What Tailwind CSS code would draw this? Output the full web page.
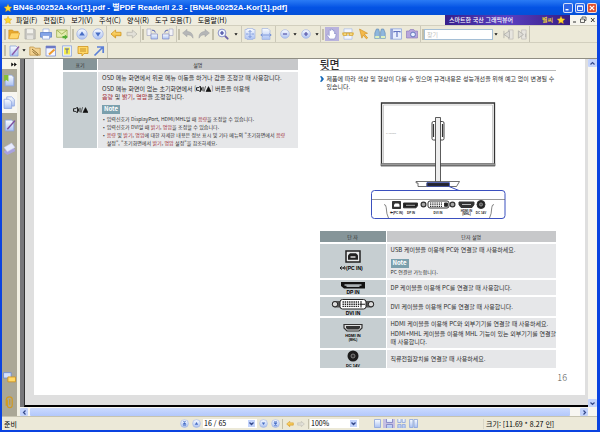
<!DOCTYPE html>
<html lang="ko">
  <head>
    <meta charset="UTF-8" />
    <meta name="viewport" content="width=device-width, initial-scale=1.0" />
    <title>BN46-00252A-Kor[1].pdf - 별PDF ReaderII 2.3</title>
    <script src="https://cdn.jsdelivr.net/npm/@tailwindcss/browser@4"></script>
  </head>
  <body class="min-h-screen flex flex-col bg-[#0a43e0] font-['Noto_Sans_CJK_KR','Noto_Sans',sans-serif] text-[7px] leading-[10px] text-black overflow-hidden">
    <!-- shared gradients and shapes -->
    <svg class="absolute w-0 h-0" aria-hidden="true">
      <defs>
        <linearGradient id="blue" x1="0" y1="0" x2="0" y2="1"><stop offset="0" stop-color="#fbfdff" /><stop offset="1" stop-color="#a9c0f2" /></linearGradient>
        <linearGradient id="gold" x1="0" y1="0" x2="0" y2="1"><stop offset="0" stop-color="#ffe48a" /><stop offset="1" stop-color="#eeb02c" /></linearGradient>
        <symbol id="star" viewBox="0 0 10 10"><path d="M5 .4 6.5 3.4 9.8 3.9 7.4 6.2 8 9.5 5 7.9 2 9.5 2.6 6.2.2 3.9 3.5 3.4Z" fill="#ffd92e" stroke="#d9960f" stroke-width=".5" /></symbol>
        <symbol id="page" viewBox="0 0 12 12"><path d="M2 1h6l2 2v8H2Z" fill="url(#blue)" stroke="#8ba3dc" stroke-width=".8" /></symbol>
        <symbol id="back" viewBox="0 0 12 12"><path d="M1 6 5.6 2v2.3H11v3.4H5.6V10Z" fill="url(#gold)" stroke="#cf9420" stroke-width=".8" /></symbol>
        <symbol id="fwd" viewBox="0 0 12 12"><path d="M11 6 6.4 2v2.3H1v3.4h5.4V10Z" fill="#e2e0d8" stroke="#b9b7ae" stroke-width=".8" /></symbol>
        <symbol id="ball" viewBox="0 0 12 12"><circle cx="6" cy="6" r="5.2" fill="url(#blue)" stroke="#a9b8e2" stroke-width=".9" /></symbol>
        <symbol id="drop" viewBox="0 0 4 3"><path d="M.4.3h3.2L2 2.4Z" fill="#111" /></symbol>
        <symbol id="volume" viewBox="0 0 15 6"><path d="M.5 1.7h1.7L4.5.3v5.4L2.2 4.3H.5ZM5.5 1.5v3M7 .8v4.4" fill="none" stroke="#111" stroke-width=".9" /><path d="M8 5.8 9.6.2M10 5.5 12.500.6 15 5.5Z" fill="#111" stroke="#111" stroke-width=".6" /></symbol>
      </defs>
    </svg>

    <header class="flex items-center h-[15px] pl-1 pr-[3px] bg-linear-to-b from-[#2a7bf5] via-[#0453e4] to-[#0450d8] text-white">
      <svg class="w-2 h-2 shrink-0"><use href="#star" /></svg>
      <h1 class="flex-1 pl-px pt-px font-['Liberation_Sans','Noto_Sans_CJK_KR',sans-serif] text-[8px] font-bold whitespace-nowrap">BN46-00252A-Kor[1].pdf - 별PDF ReaderII 2.3 - [BN46-00252A-Kor[1].pdf]</h1>
      <div class="flex gap-0.5">
        <button aria-label="최소화" class="size-[10px] rounded-[2px] border border-white/80 bg-[#2e66e6]"><svg viewBox="0 0 8 8"><path d="M1.5 5.7H4.5" stroke="#fff" stroke-width="1.4" /></svg></button>
        <button aria-label="최대화" class="size-[10px] rounded-[2px] border border-white/80 bg-[#2e66e6]"><svg viewBox="0 0 8 8"><path d="M1.5 1.8h5v4.7h-5ZM1.5 2.4h5" fill="none" stroke="#fff" stroke-width=".9" /></svg></button>
        <button aria-label="닫기" class="size-[10px] rounded-[2px] border border-white/80 bg-[#df5130]"><svg viewBox="0 0 8 8"><path d="m1.8 1.8 4.4 4.4m0-4.4L1.8 6.2" stroke="#fff" stroke-width="1.2" /></svg></button>
      </div>
    </header>

    <div class="flex-1 flex flex-col ml-0.5 mr-[3px] mb-0.5 bg-[#ece9d8]">
      <nav class="flex items-center h-[10px] pl-0.5 bg-[#efede0]">
        <svg class="w-2 h-2 shrink-0"><use href="#star" /></svg>
        <div class="flex-1 flex gap-1.5 pl-1 whitespace-nowrap">
          <button>파일(F)</button>
          <button>편집(E)</button>
          <button>보기(V)</button>
          <button>주석(C)</button>
          <button>양식(R)</button>
          <button>도구 모음(T)</button>
          <button>도움말(H)</button>
        </div>
        <a href="#" class="flex items-center w-[125px] h-[10px] pl-1 pr-[5px] bg-linear-to-r from-[#37208c] via-[#5a3fc0] to-[#371d84] text-[6px] font-medium text-white whitespace-nowrap">
          <span class="flex-1">스마트한 국산 그래픽뷰어</span>
          <span class="text-[#ffe32b] pr-1">별씨</span>
          <svg class="w-2 h-2"><use href="#star" /></svg>
        </a>
        <div class="flex bg-[#f6f5ee]">
          <button aria-label="문서 최소화" class="w-2 h-[10px]"><svg viewBox="0 0 8 10"><path d="M3 7h3" stroke="#333" /></svg></button>
          <button aria-label="문서 복원" class="w-[10px] h-[10px]"><svg viewBox="0 0 10 10"><path d="M4 3.5V2h4v3.5H6.5M2.5 4h4v3.5h-4Z" fill="none" stroke="#444" stroke-width=".8" /></svg></button>
          <button aria-label="문서 닫기" class="w-[9px] h-[10px]"><svg viewBox="0 0 9 10"><path d="m3 3 3.5 4m0-4L3 7" stroke="#333" /></svg></button>
        </div>
      </nav>

      <div class="flex border-y border-[#d2cfbe] h-[18px]">
        <div class="flex items-center pl-0.5 border-r border-[#c5c2b2]">
          <i class="w-0.5 h-[11px] bg-[#c3bfaa]"></i>
          <button aria-label="열기" class="w-4 flex justify-center"><svg class="size-3" viewBox="0 0 12 12"><path d="M.8 10.5V2h3.8l1 1.3h4.6v7.2Z" fill="#e9a92e" stroke="#c98d20" stroke-width=".6" /><path d="M.8 10.8 3 5h8.7l-2 5.8Z" fill="#ffd66b" stroke="#d89a25" stroke-width=".6" /></svg></button>
          <button aria-label="저장" class="w-4 flex justify-center"><svg class="size-3" viewBox="0 0 12 12"><path d="M1 1h9.3l.9.9V11H1Z" fill="#c9c8c3" stroke="#aaa9a4" stroke-width=".7" /><path d="M3 1.2h6v4H3Z" fill="#f2f1ec" /><path d="M3 7.3h6V11H3Z" fill="#e4e3de" /></svg></button>
          <button aria-label="인쇄" class="w-4 flex justify-center"><svg class="size-3" viewBox="0 0 12 12"><path d="M3 1h6v4H3Z" fill="#fff" stroke="#8ba3dc" stroke-width=".6" /><path d="M.5 4.5h11v4.7H.5Z" fill="#82a4e8" stroke="#5478c4" stroke-width=".7" /><path d="M2.5 7.5h7v3.6h-7Z" fill="#f3f7ff" stroke="#7893d2" stroke-width=".6" /></svg></button>
          <button aria-label="메일" class="w-4 flex justify-center"><svg class="size-3" viewBox="0 0 12 12"><path d="M.6 2h10.5v7.3H.6Z" fill="#e5edb0" stroke="#93a846" stroke-width=".7" /><path d="m.8 2.2 5 4 5.1-4" fill="none" stroke="#93a846" stroke-width=".8" /><path d="M6.5 8h2.3V6.5l3 2.6-3 2.6v-1.5H6.5Z" fill="#52ae35" /></svg></button>
          <i class="w-px h-4 mr-px bg-[#cbc8b8]"></i><i class="w-0.5 h-[11px] bg-[#c3bfaa]"></i>
          <button aria-label="이전 쪽" class="w-4 flex justify-center"><svg class="size-3" viewBox="0 0 12 12"><use href="#ball" /><path d="m6 3.6 2.8 3.8H3.2Z" fill="#476dc4" /></svg></button>
          <button aria-label="다음 쪽" class="w-4 flex justify-center"><svg class="size-3" viewBox="0 0 12 12"><use href="#ball" /><path d="m6 8.4 2.8-3.8H3.2Z" fill="#476dc4" /></svg></button>
          <i class="w-px h-4 mr-px bg-[#cbc8b8]"></i>
          <button aria-label="뒤로" class="w-4 flex justify-center"><svg class="size-3"><use href="#back" /></svg></button>
          <button aria-label="앞으로" class="w-4 flex justify-center"><svg class="size-3"><use href="#fwd" /></svg></button>
          <i class="w-px h-4 mr-px bg-[#cbc8b8]"></i><i class="w-0.5 h-[11px] bg-[#c3bfaa]"></i>
          <button aria-label="왼쪽 회전" class="w-4 flex justify-center"><svg class="size-3" viewBox="0 0 12 12"><path d="M1 1h4v6.5H1Z" fill="#f3f3f8" stroke="#a6a9c4" stroke-width=".7" /><path d="M5 6h6.5v5H5Z" fill="url(#blue)" stroke="#8389c4" stroke-width=".7" /><path d="M6 2.2q3-.6 3.3 2.3" fill="none" stroke="#5a66b5" /></svg></button>
          <button aria-label="오른쪽 회전" class="w-4 flex justify-center"><svg class="size-3" viewBox="0 0 12 12"><path d="M7 1h4v6.5H7Z" fill="#f3f3f8" stroke="#a6a9c4" stroke-width=".7" /><path d="M.5 6H7v5H.5Z" fill="url(#blue)" stroke="#8389c4" stroke-width=".7" /><path d="M6 2.2q-3-.6-3.3 2.3" fill="none" stroke="#5a66b5" /></svg></button>
          <i class="w-px h-4 mr-px bg-[#cbc8b8]"></i><i class="w-0.5 h-[11px] bg-[#c3bfaa]"></i>
          <button aria-label="실행 취소" class="w-4 flex justify-center"><svg class="size-3" viewBox="0 0 12 12"><path d="M.6 5 5 1.4v2.2c4 0 6.2 2.4 6 6.6C9.7 7.6 8 6.7 5 6.7v2Z" fill="#b5b6b7" stroke="#9fa0a2" stroke-width=".5" /></svg></button>
          <button aria-label="다시 실행" class="w-4 flex justify-center"><svg class="size-3" viewBox="0 0 12 12"><path d="M11.4 5 7 1.4v2.2c-4 0-6.2 2.4-6 6.6 1.3-2.6 3-3.5 6-3.5v2Z" fill="#b5b6b7" stroke="#9fa0a2" stroke-width=".5" /></svg></button>
          <i class="w-0.5 h-[11px] mr-px bg-[#c3bfaa]"></i>
          <button aria-label="확대 도구" class="w-4 flex justify-center"><svg class="size-3" viewBox="0 0 12 12"><path d="m7.5 7.5 3.2 3.2" stroke="#6d62a8" stroke-width="1.8" stroke-linecap="round" /><circle cx="5" cy="5" r="3.9" fill="#eef4ff" stroke="#8a90c8" /><path d="M5 3v4M3 5h4" stroke="#3b3f9c" stroke-width="1.2" /></svg></button>
          <button aria-label="확대 메뉴" class="w-[10px] flex justify-center"><svg class="w-1 h-[3px]"><use href="#drop" /></svg></button>
          <i class="w-px h-4 bg-[#cbc8b8]"></i>
          <button aria-label="쪽 맞춤" class="w-4 flex justify-center"><svg class="size-3" viewBox="0 0 12 12"><path d="M1 1.5h2V.5h6v1h2v9H9v1H3v-1H1Z" fill="url(#blue)" stroke="#a3b4e0" stroke-width=".7" /><path d="M6 2.5v7M4.5 4 6 2.5 7.5 4m-3 4L6 9.5 7.5 8M2 6h2.5M7.5 6H10" fill="none" stroke="#6f8dd6" stroke-width=".8" /></svg></button>
          <button aria-label="너비 맞춤" class="w-4 flex justify-center"><svg class="size-3" viewBox="0 0 12 12"><path d="M2 .5h6l2 2v9H2Z" fill="url(#blue)" stroke="#a3b4e0" stroke-width=".7" /><path d="M.5 7h11M2.5 5.5 1 7l1.5 1.5m7-3L11 7 9.5 8.5" fill="none" stroke="#6f8dd6" stroke-width=".8" /></svg></button>
          <i class="w-px h-4 mx-px bg-[#cbc8b8]"></i>
          <button aria-label="축소" class="w-[15px] flex justify-center"><svg class="size-[10px]" viewBox="0 0 12 12"><use href="#ball" /><path d="M3.5 6h5" stroke="#5150a4" stroke-width="1.4" /></svg></button>
          <button aria-label="축소 메뉴" class="w-1.5 flex justify-center"><svg class="w-1 h-[3px]"><use href="#drop" /></svg></button>
          <button aria-label="확대" class="w-[15px] flex justify-center"><svg class="size-[10px]" viewBox="0 0 12 12"><use href="#ball" /><path d="M3.5 6h5M6 3.5v5" stroke="#5150a4" stroke-width="1.4" /></svg></button>
          <button aria-label="배율 메뉴" class="w-[7px] flex justify-center"><svg class="w-1 h-[3px]"><use href="#drop" /></svg></button>
          <i class="w-px h-4 mr-px bg-[#cbc8b8]"></i><i class="w-0.5 h-[11px] bg-[#c3bfaa]"></i>
          <button aria-label="손 도구" class="w-4 h-[14px] flex justify-center items-center"><span class="flex justify-center items-center size-[14px] bg-[#b9b3dd]"><svg class="size-3" viewBox="0 0 12 12"><path d="M3.6 11 1 7.3c-.5-.9.6-1.4 1.2-.7l1 1V2.6c0-.9 1.2-.9 1.3 0V1.5c0-.9 1.3-.9 1.4 0v.7c0-.9 1.3-.9 1.4 0v1c.1-.8 1.3-.8 1.3 0V6c.2-.8 1.6-.9 1.5.1C10 8 9.5 9.5 8.5 11Z" fill="#fff" stroke="#8087c8" stroke-width=".6" /></svg></span></button>
          <button aria-label="안경" class="w-4 flex justify-center"><svg class="size-3" viewBox="0 0 12 12"><path d="M2 .8h8v3.7H2ZM2 7.5h8v3.7H2Z" fill="#f2f6ff" stroke="#9db3e2" stroke-width=".6" /><path d="M.5 5h11M1 5v2.2h3.8V5m2.4 0v2.2H11V5" fill="#fff2b0" stroke="#dba323" stroke-width="1" /></svg></button>
          <button aria-label="선택" class="w-4 flex justify-center"><svg class="size-3" viewBox="0 0 12 12"><path d="m1.5 1 8 4.3-3.2.8 3.4 3.7-1.2 1.1-3.3-3.7-1.3 3Z" fill="#f4b94a" stroke="#cf8b1c" stroke-width=".6" /></svg></button>
          <button aria-label="찾기 도구" class="w-4 flex justify-center"><svg class="size-3" viewBox="0 0 12 12"><path d="M2.4 1h2.2l.8 3v6.5H.8V5ZM7.4 1h2.2l1.6 4v5.5H6.6V4Z" fill="#8fb7dd" stroke="#5884b2" stroke-width=".6" /><path d="M1.2 8h4v2.2h-4ZM7 8h4v2.2H7Z" fill="#dcf0c0" /></svg></button>
          <button aria-label="텍스트 선택" class="w-4 flex justify-center"><svg class="size-3" viewBox="0 0 12 12"><path d="M.5.8h11v10.4H.5Z" fill="#e8effd" stroke="#8fa6dc" stroke-width=".8" /><path d="M4 3.5h6M7 3.5V9M4 3v1.5M10 3v1.5M2 1v10" stroke="#6275c0" stroke-width="1.2" /></svg></button>
          <button aria-label="스냅샷" class="w-4 flex justify-center"><svg class="size-3" viewBox="0 0 12 12"><path d="M.5 3h2.7l1-1.5h3.5l1 1.5h2.8v7H.5Z" fill="#b7a5dc" stroke="#8573b8" stroke-width=".6" /><circle cx="7" cy="6.5" r="2.4" fill="#e7f0ff" stroke="#6176bd" /></svg></button>
          <i class="w-px h-4 mr-px bg-[#cbc8b8]"></i><i class="w-0.5 h-[11px] bg-[#c3bfaa]"></i>
          <input type="text" aria-label="찾기" placeholder="찾기" class="w-[69px] h-[11px] pl-0.5 bg-white border border-[#a5bfd6] text-[6px] placeholder:text-[#c2c2bd]" />
          <button aria-label="찾기 메뉴" class="w-1.5 flex justify-center"><svg class="w-1 h-[3px]"><use href="#drop" /></svg></button>
          <button aria-label="이전 찾기" class="w-[14px] flex justify-center ml-0.5"><svg class="size-[11px]" viewBox="0 0 12 12"><path d="M6 1h5v10H6Z" fill="#e7e5df" stroke="#bbb9b4" stroke-width=".7" /><path d="M1 6 7 2v8ZM1 2v8" fill="#dddbd5" stroke="#a9a8a5" stroke-width=".8" /></svg></button>
          <button aria-label="다음 찾기" class="w-[14px] flex justify-center"><svg class="size-[11px]" viewBox="0 0 12 12"><path d="M5 1h5v10H5Z" fill="#e7e5df" stroke="#bbb9b4" stroke-width=".7" /><path d="M7 6 1.5 2v8ZM9.5 5v4" fill="#dddbd5" stroke="#a9a8a5" stroke-width=".8" /></svg></button>
        </div>
      </div>

      <div class="flex h-4 border-b border-[#8f8d83]">
        <div class="flex items-center pl-0.5 border-r border-[#c5c2b2]">
          <i class="w-0.5 h-[11px] bg-[#c3bfaa]"></i>
          <button aria-label="펜" class="w-[15px] flex justify-center"><svg class="size-3" viewBox="0 0 12 12"><use href="#page" /><path d="m4 10 7-8.5" stroke="#8b5aa8" stroke-width="1.4" /></svg></button>
          <button aria-label="펜 메뉴" class="w-1.5 flex justify-center"><svg class="w-1 h-[3px]"><use href="#drop" /></svg></button>
          <button aria-label="첨부" class="w-4 flex justify-center"><svg class="size-3" viewBox="0 0 12 12"><path d="M.8 2h4l1 1.2h5.4v7H.8Z" fill="#f2d190" stroke="#bf9140" stroke-width=".7" /><path d="m3 4 5.5 4.5c1.2 1 .2 2.3-1 1.3L3.5 6.5" fill="none" stroke="#8b6c2e" /></svg></button>
          <button aria-label="편집" class="w-4 flex justify-center"><svg class="size-3" viewBox="0 0 12 12"><path d="M1 1h9.5v10H1Z" fill="#f4f6ff" stroke="#8392cf" stroke-width=".8" /><path d="M1 1h9.5v2.3H1Z" fill="#6d79c4" /><path d="m4 9.5 5.5-5" stroke="#ef9a2e" stroke-width="2" /></svg></button>
          <button aria-label="형광펜" class="w-4 flex justify-center"><svg class="size-3" viewBox="0 0 12 12"><path d="M1.5.8h9v10.4h-9Z" fill="#e9f0fd" stroke="#8fa6dc" stroke-width=".8" /><path d="M3 2.5h6v7H3Z" fill="#f6ee4a" /><path d="M4 4h4M6 4v4.5" stroke="#5a64a0" /></svg></button>
          <button aria-label="메모" class="w-4 flex justify-center"><svg class="size-3" viewBox="0 0 12 12"><path d="M1 1.5h10v7H7L5 11V8.5H1Z" fill="#ffd868" stroke="#cf9420" stroke-width=".8" /><path d="M3 4h6M3 6h6" stroke="#b98014" stroke-width=".8" /></svg></button>
          <button aria-label="화살표" class="w-4 flex justify-center"><svg class="size-3" viewBox="0 0 12 12"><path d="m1.5 10.5 8-8M4 2h6.2v6" fill="none" stroke="#5c80d8" stroke-width="1.7" /></svg></button>
        </div>
      </div>

      <main class="flex-1 flex min-h-0">
        <aside class="w-[18px] shrink-0 flex flex-col items-start bg-[#aaa796] border-r-3 border-[#f1efe2]">
          <button aria-label="펼치기" class="w-full h-[10px] bg-[#f7f5e9] flex items-center justify-end"><svg class="w-[6px] h-[5px]" viewBox="0 0 6 5"><path d="M.3.5 2.8 2.5.3 4.5ZM3.2.5 5.8 2.5 3.2 4.5Z" /></svg></button>
          <button aria-label="책갈피" class="w-full h-[23px] flex justify-center items-center"><svg class="size-[13px]" viewBox="0 0 12 12"><use href="#page" /><path d="M1 1h4v6L3 5.5 1 7Z" fill="#84bf35" /></svg></button>
          <button aria-label="쪽" class="w-full h-[21px] bg-[#f7f6f0] flex justify-center items-center"><svg class="size-[13px]" viewBox="0 0 12 12"><path d="M3.5.8H8l2.5 2.5v6h-7Z" fill="url(#blue)" stroke="#8ba3dc" stroke-width=".7" /><path d="M1 3h4.5L8 5.5v6H1Z" fill="url(#blue)" stroke="#8ba3dc" stroke-width=".7" /></svg></button>
          <button aria-label="주석" class="w-full h-[24px] flex justify-center items-center"><svg class="size-[13px]" viewBox="0 0 12 12"><use href="#page" /><path d="m4 9.5 7-8" stroke="#7c4f9e" stroke-width="1.4" /></svg></button>
          <button aria-label="레이어" class="w-full h-[22px] flex justify-center items-center"><svg class="size-[13px]" viewBox="0 0 12 12"><path d="m1 8.5 7-4L11 7v1.5L4 12 1 9.8Z" fill="#a9a2de" /><path d="m1 5 7-4L11 5 4 9Z" fill="#e8ebfc" stroke="#c3c8ee" stroke-width=".5" /></svg></button>
          <button aria-label="의견" class="w-full h-[22px] mt-auto flex justify-center items-center"><svg class="size-[13px]" viewBox="0 0 12 12"><path d="M.5 1.5h7v5h-7Z" fill="#d4e1fd" stroke="#6e8bd4" stroke-width=".8" /><path d="M4.5 5.5h7V10h-7Z" fill="#ffd868" stroke="#cf9420" stroke-width=".8" /></svg></button>
          <button aria-label="첨부 파일" class="w-full h-[28px] flex justify-center items-center"><svg class="size-[13px]" viewBox="0 0 12 12"><path d="M4 3.5v5c0 3 4.5 3 4.5 0V3c0-3-5-3-5.5 0v6M6.2 3v5" fill="none" stroke="#d19a20" stroke-width="1.1" /></svg></button>
        </aside>

        <div class="flex-1 min-w-0 flex flex-col">
          <div class="flex-1 flex min-h-0">
            <div class="flex-1 min-w-0 bg-[#dfdfdf] border-l-4 border-[#77777a]">
              <div class="h-full flex pl-[9px] pr-[3px] pb-[10px] border-l border-b-2 border-l-[#333] border-b-black overflow-hidden">
                <article class="flex-1 grid grid-cols-2 bg-white text-[6px] leading-[8px] text-[#2e2e2e] whitespace-nowrap">
                  <section class="pl-[29px] pr-[12px]">
                    <table class="w-full table-fixed border-separate border-spacing-0">
                      <thead>
                        <tr class="h-[11px] text-[5px]">
                          <th class="w-[34px] font-normal bg-[#869599]">표기</th>
                          <th class="font-normal bg-[#c7c8ca] border-l border-white">설명</th>
                        </tr>
                      </thead>
                      <tbody>
                        <tr>
                          <td class="bg-[#c6ced1] border-t-2 border-white"><svg class="mx-auto w-[15px] h-[6px]"><use href="#volume" /></svg></td>
                          <td class="bg-[#e6e7e9] border-t-2 border-l border-white pl-1 pt-0.5 pb-px">
                            <p>OSD 메뉴 화면에서 위로 메뉴 이동을 하거나 값을 조정할 때 사용합니다.</p>
                            <p class="mt-[3px]">OSD 메뉴 화면이 없는 초기화면에서 [<svg class="inline w-[15px] h-[6px] align-[-1px]"><use href="#volume" /></svg>] 버튼을 이용해<br /><span class="text-[#a3303a]">음량</span> 및 <span class="text-[#a3303a]">밝기</span>, <span class="text-[#a3303a]">명암</span>을 조정합니다.</p>
                            <div class="mt-1 w-[18px] h-[9px] bg-[#7ba0ad] text-white font-bold text-center">Note</div>
                            <ul class="mt-px text-[5px]">
                              <li class="flex gap-0.5 pl-px"><span>•</span><span>입력신호가 DisplayPort, HDMI/MHL일 때 <span class="text-[#a3303a]">음량</span>을 조정할 수 있습니다.</span></li>
                              <li class="flex gap-0.5 pl-px"><span>•</span><span>입력신호가 DVI일 때 <span class="text-[#a3303a]">밝기</span>, <span class="text-[#a3303a]">명암</span>을 조정할 수 있습니다.</span></li>
                              <li class="flex gap-0.5 pl-px"><span>•</span><span><span class="text-[#a3303a]">음량</span> 및 <span class="text-[#a3303a]">밝기</span>, <span class="text-[#a3303a]">명암</span>에 대한 자세한 내용은 정보 표시 및 기타 메뉴의 "초기화면에서 <span class="text-[#a3303a]">음량</span><br />설정", "초기화면에서 <span class="text-[#a3303a]">밝기</span>, <span class="text-[#a3303a]">명암</span> 설정"을 참조하세요.</span></li>
                            </ul>
                          </td>
                        </tr>
                      </tbody>
                    </table>
                  </section>

                  <section class="pl-[10px] pr-[18px]">
                    <div class="mr-[11px]">
                      <h2 class="h-3 text-[11px] leading-[11px] font-medium border-b border-[#bbb]">뒷면</h2>
                      <div class="flex gap-[3px] pt-1">
                        <svg class="w-1 h-[6px] mt-px" viewBox="0 0 4 6"><path d="M0 .2h1.8L4 3 1.8 5.8H0L1.5 3Z" fill="#1468b8" /></svg>
                        <p>제품에 따라 색상 및 형상이 다를 수 있으며 규격내용은 성능개선을 위해 예고 없이 변경될 수<br />있습니다.</p>
                      </div>
                      <svg class="block mx-auto mt-[11px] w-[136px] h-[118px]" viewBox="370 103 136 118" fill="none" stroke="#333" font-family="Liberation Sans" font-weight="bold">
                        <path d="M381.5 104h113v62.5h-113Z" stroke-width="1.3" />
                        <path d="M383.5 106h109v58.5h-109Z" stroke="#999" stroke-width=".5" />
                        <path d="M381 164.5h114v2.3H381Z" fill="#999" stroke="#555" stroke-width=".5" />
                        <text x="386" y="135" font-size="2" font-weight="normal" fill="#999" stroke="none">SAMSUNG</text>
                        <rect x="432" y="122.5" width="12" height="18.5" rx="1.5" fill="#fff" stroke-width=".9" />
                        <path d="M433.5 125v13m9-13v13" stroke-width="1.2" />
                        <path d="M435.5 118.5h5V183h-5Z" fill="#eee" stroke-width=".8" />
                        <path d="M416 182.5h43.5l-3 5h-38.5v-3.5l-2-.2Z" fill="#fff" stroke-width=".7" />
                        <path d="M427 184h22v3h-22Z" fill="#223" />
                        <path d="M427 183.5h22.5v4H427Z" stroke="#3b50bf" stroke-width=".7" />
                        <path d="m449 187.5 10 4" stroke="#3b50bf" />
                        <rect x="371.5" y="191.5" width="133.5" height="28" rx="3" fill="#fff" stroke="#3b50bf" />
                        <path d="M372 200.5h133" stroke="#555" stroke-width=".6" />
                        <path d="M384 205.5q2 0 2.2 3 .3 7 2.3 10.5M494 205.5q-2 0-2.2 3-.3 7-2.3 10.5" stroke-width=".6" />
                        <path d="M392.5 202.5h8v7h-8Z" fill="#333" /><path d="M395 204.5h3.5l1 1.2v2H394v-2Z" fill="#fff" stroke="none" />
                        <path d="M403.5 204h14v2.8l-1.5 2h-12.5Z" fill="#222" /><path d="M406 206.3h9" stroke="#aaa" />
                        <circle cx="423.5" cy="205.5" r="2.4" fill="#aaa" stroke-width="1.2" /><circle cx="452.5" cy="205.5" r="2.4" fill="#aaa" stroke-width="1.2" />
                        <rect x="428" y="202" width="21" height="7" rx="2" fill="#fff" stroke-width="1" />
                        <path d="M430 204h12M430 205.8h12M430 207.5h12" stroke="#222" stroke-dasharray="1.3 .9" stroke-width="1.1" /><path d="M444.5 204h3v3.3h-3Z" fill="#222" />
                        <path d="M459 203h15v2.5l-2 3h-11l-2-3Z" fill="#333" /><path d="M462 205.5h9" stroke="#bbb" />
                        <circle cx="481" cy="205.5" r="4" fill="#222" /><circle cx="481" cy="205.5" r="1.6" fill="#555" stroke="#bbb" stroke-width=".6" />
                        <g font-size="3" fill="#222" stroke="none" text-anchor="middle">
                          <text x="396.5" y="214.5">⬅(PC IN)</text>
                          <text x="411" y="214.5">DP IN</text>
                          <text x="438" y="214.5">DVI IN</text>
                          <text x="466.5" y="213">HDMI IN</text>
                          <text x="466.5" y="216">(MHL)</text>
                          <text x="481" y="214.5">DC 14V</text>
                        </g>
                      </svg>

                      <table class="w-full mt-[11px] table-fixed border-separate border-spacing-0">
                        <thead>
                          <tr class="h-[11px] text-[5px]">
                            <th class="w-[66px] font-normal bg-[#869599]">단 자</th>
                            <th class="font-normal bg-[#c7c8ca] border-l border-white">단자 설명</th>
                          </tr>
                        </thead>
                        <tbody>
                          <tr class="h-[36px]">
                            <td class="bg-[#c6ced1] border-t-2 border-white">
                              <svg class="mx-auto w-[36px] h-[24px]" viewBox="0 0 36 24"><path d="M11 2h14v11H11Z" fill="#e8eaeb" stroke="#222" stroke-width="1.5" /><path d="M15 4.2h6l2 2v4.6H13V6.2Z" fill="#222" /><path d="M15.5 7h5v2h-5Z" fill="#aaa" /><path d="M5 19h6M6.8 17.4 5 19l1.8 1.6M8.500 19l1.3-1.8M8.500 19l1.3 1.6" fill="none" stroke="#111" stroke-width=".9" /><text x="11" y="21" font-family="Liberation Sans" font-weight="bold" font-size="5">(PC IN)</text></svg>
                            </td>
                            <td class="bg-[#e6e7e9] border-t-2 border-l border-white pl-1 align-top pt-0.5">
                              <p>USB 케이블을 이용해 PC와 연결할 때 사용하세요.</p>
                              <div class="mt-[5px] w-[18px] h-[9px] bg-[#7ba0ad] text-white font-bold text-center">Note</div>
                              <p class="text-[5px]">PC 연결만 가능합니다.</p>
                            </td>
                          </tr>
                          <tr class="h-[17px]">
                            <td class="bg-[#c6ced1] border-t-2 border-white">
                              <svg class="mx-auto w-[36px] h-[14px]" viewBox="0 0 36 14"><path d="M6 1h24v6.5H9L6 5Z" fill="#111" /><path d="M9.5 3.2h17v1.6h-2V6h-13V4.8h-2Z" fill="#aab1b4" /><text x="18" y="13" text-anchor="middle" font-family="Liberation Sans" font-weight="bold" font-size="5">DP IN</text></svg>
                            </td>
                            <td class="bg-[#e6e7e9] border-t-2 border-l border-white pl-1">DP 케이블을 이용해 PC를 연결할 때 사용합니다.</td>
                          </tr>
                          <tr class="h-[21px]">
                            <td class="bg-[#c6ced1] border-t-2 border-white">
                              <svg class="mx-auto w-[44px] h-[18px]" viewBox="0 0 44 18"><rect x="1" y="3" width="42" height="6.5" rx="3.2" fill="#555" /><circle cx="4" cy="6.2" r="2.7" fill="#ddd" stroke="#222" /><circle cx="40" cy="6.2" r="2.7" fill="#ddd" stroke="#222" /><rect x="9" y="1.5" width="26" height="9.5" rx="2.5" fill="#fff" stroke="#222" /><path d="M11.5 4H28M11.5 6.2H28M11.5 8.4H28" stroke="#222" stroke-width="1.4" stroke-dasharray="1.4 .8" /><path d="M30 3v6.5M28.5 6.2H34" stroke="#222" stroke-width="1.1" /><text x="22" y="17" text-anchor="middle" font-family="Liberation Sans" font-weight="bold" font-size="5">DVI IN</text></svg>
                            </td>
                            <td class="bg-[#e6e7e9] border-t-2 border-l border-white pl-1">DVI 케이블을 이용해 PC를 연결할 때 사용합니다.</td>
                          </tr>
                          <tr class="h-[32px]">
                            <td class="bg-[#c6ced1] border-t-2 border-white">
                              <svg class="mx-auto w-[36px] h-[20px]" viewBox="0 0 36 20"><path d="M9 1.5h18V5L24 8H12L9 5Z" fill="#ddd" stroke="#333" stroke-width="1.2" /><path d="M11 3h14v2l-1.5 1.5h-11L11 5Z" fill="#333" /><text x="18" y="14" text-anchor="middle" font-family="Liberation Sans" font-weight="bold" font-size="4">HDMI IN</text><text x="18" y="18" text-anchor="middle" font-family="Liberation Sans" font-weight="bold" font-size="3">(MHL)</text></svg>
                            </td>
                            <td class="bg-[#e6e7e9] border-t-2 border-l border-white pl-1 align-top pt-0.5">
                              <p>HDMI 케이블을 이용해 PC와 외부기기를 연결할 때 사용하세요.</p>
                              <p class="mt-0.5">HDMI+MHL 케이블을 이용해 MHL 기능이 있는 외부기기를 연결할<br />때 사용합니다.</p>
                            </td>
                          </tr>
                          <tr class="h-[20px]">
                            <td class="bg-[#c6ced1] border-t-2 border-white">
                              <svg class="mx-auto w-[36px] h-[18px]" viewBox="0 0 36 18"><circle cx="18" cy="6" r="5.5" fill="#1c1c1c" /><circle cx="18" cy="6" r="2" fill="#333" stroke="#999" stroke-width=".7" /><text x="18" y="17" text-anchor="middle" font-family="Liberation Sans" font-weight="bold" font-size="4">DC 14V</text></svg>
                            </td>
                            <td class="bg-[#e6e7e9] border-t-2 border-l border-white pl-1">직류전원장치를 연결할 때 사용하세요.</td>
                          </tr>
                        </tbody>
                      </table>
                    </div>
                    <p class="mt-[5px] text-right text-[9px] leading-[10px] font-light text-[#555]">16</p>
                  </section>
                </article>
              </div>
            </div>
            <div class="w-[9px] shrink-0 flex flex-col justify-between bg-[#f7f6f1]">
              <button aria-label="위로" class="h-2 rounded-[1px] bg-[#c3d3fc]"><svg class="mx-auto size-[5px]" viewBox="0 0 5 5"><path d="m.5 3.5 2-2 2 2" fill="none" stroke="#34498c" stroke-width="1.2" /></svg></button>
              <button aria-label="아래로" class="h-2 rounded-[1px] bg-[#c3d3fc]"><svg class="mx-auto size-[5px]" viewBox="0 0 5 5"><path d="m.5 1.5 2 2 2-2" fill="none" stroke="#34498c" stroke-width="1.2" /></svg></button>
            </div>
          </div>
          <div class="flex h-[9px] pt-px bg-[#f7f6f1]">
            <button aria-label="왼쪽으로" class="w-2 rounded-[1px] bg-[#c3d3fc]"><svg class="mx-auto size-[5px]" viewBox="0 0 5 5"><path d="m3.5.5-2 2 2 2" fill="none" stroke="#34498c" stroke-width="1.2" /></svg></button>
            <div class="flex-1 ml-0.5 mr-[10px] rounded-[1px] bg-linear-to-b from-[#cbdafe] to-[#b3c8fb]"></div>
            <button aria-label="오른쪽으로" class="w-2 mr-[9px] rounded-[1px] bg-[#c3d3fc]"><svg class="mx-auto size-[5px]" viewBox="0 0 5 5"><path d="m1.5.5 2 2-2 2" fill="none" stroke="#34498c" stroke-width="1.2" /></svg></button>
          </div>
        </div>
      </main>

      <footer class="flex items-center h-[14px] border-t border-[#c6c3b0] whitespace-nowrap">
        <span class="w-[176px] pl-0.5">준비</span>
        <button aria-label="처음" class="w-3 flex justify-center"><svg class="size-[9px]" viewBox="0 0 12 12"><use href="#ball" /><path d="M4 3.2h4M6 4.5 8 7H4ZM4 8.5h4" fill="#476dc4" stroke="#476dc4" stroke-width=".8" /></svg></button>
        <button aria-label="이전" class="w-3 flex justify-center"><svg class="size-[9px]" viewBox="0 0 12 12"><use href="#ball" /><path d="m6 4 2.3 3.5H3.7Z" fill="#476dc4" /></svg></button>
        <div class="relative ml-px">
          <select aria-label="쪽 번호" class="block w-[54px] h-[9px] pl-px appearance-none bg-white text-[7px] leading-[9px]"><option>16 / 65</option></select>
          <svg class="absolute right-0.5 top-px size-[7px] bg-[#c3d3fc] pointer-events-none" viewBox="0 0 7 7"><path d="m1.5 2.5 2 2 2-2" fill="none" stroke="#34498c" stroke-width="1.3" /></svg>
        </div>
        <button aria-label="다음" class="w-3 flex justify-center"><svg class="size-[9px]" viewBox="0 0 12 12"><use href="#ball" /><path d="m6 8 2.3-3.5H3.7Z" fill="#476dc4" /></svg></button>
        <button aria-label="끝" class="w-3 flex justify-center"><svg class="size-[9px]" viewBox="0 0 12 12"><use href="#ball" /><path d="M4 3.5h4M6 7.5 8 5H4ZM4 8.8h4" fill="#476dc4" stroke="#476dc4" stroke-width=".8" /></svg></button>
        <i class="w-px h-[10px] mx-px bg-[#c3bfaa]"></i>
        <button aria-label="뒤로" class="w-[11px] flex justify-center"><svg class="size-2"><use href="#back" /></svg></button>
        <button aria-label="앞으로" class="w-3 flex justify-center"><svg class="size-2"><use href="#fwd" /></svg></button>
        <i class="w-px h-[10px] mx-px bg-[#c3bfaa]"></i>
        <div class="relative">
          <select aria-label="배율" class="block w-[49px] h-[9px] pl-px appearance-none bg-white text-[7px] leading-[9px]"><option>100%</option></select>
          <svg class="absolute right-0.5 top-px size-[7px] bg-[#c3d3fc] pointer-events-none" viewBox="0 0 7 7"><path d="m1.5 2.5 2 2 2-2" fill="none" stroke="#34498c" stroke-width="1.3" /></svg>
        </div>
        <div class="flex ml-3">
          <button aria-label="한 쪽" class="w-3 flex justify-center"><svg class="size-[9px]" viewBox="0 0 9 9"><path d="M1.5.5h6v8h-6Z" fill="url(#blue)" stroke="#8ba3dc" stroke-width=".8" /></svg></button>
          <button aria-label="연속" class="w-3 flex justify-center bg-[#c5bfe2]"><svg class="size-[9px]" viewBox="0 0 9 9"><path d="M1.5-1v4.5h6V-1ZM1.5 5.5h6v4h-6Z" fill="url(#blue)" stroke="#7b7fc0" stroke-width=".8" /></svg></button>
          <button aria-label="연속 두 쪽" class="w-3 flex justify-center"><svg class="size-[9px]" viewBox="0 0 9 9"><path d="M.8-1v4.5H4V-1ZM5.2-1v4.5h3V-1ZM.8 5.5H4v4H.8ZM5.2 5.5h3v4h-3Z" fill="url(#blue)" stroke="#8ba3dc" stroke-width=".8" /></svg></button>
          <button aria-label="두 쪽" class="w-3 flex justify-center"><svg class="size-[9px]" viewBox="0 0 9 9"><path d="M.6.5H4v8H.6ZM5 .5h3.500v8H5Z" fill="url(#blue)" stroke="#8ba3dc" stroke-width=".8" /></svg></button>
        </div>
        <span class="ml-auto w-[114px] pl-0.5 border-l border-[#d9d6c6]">크기: [11.69 * 8.27 인]</span>
      </footer>
    </div>
  </body>
</html>
